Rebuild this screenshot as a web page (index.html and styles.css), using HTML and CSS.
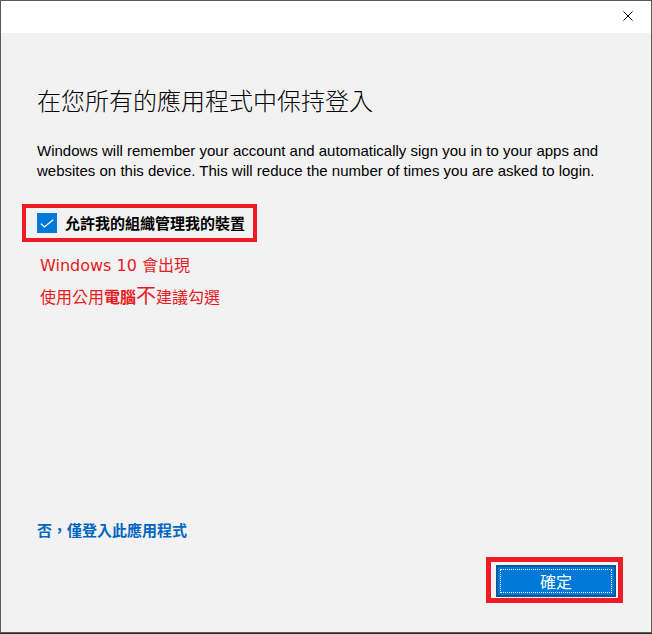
FILE: index.html
```html
<!DOCTYPE html>
<html lang="zh-Hant">
<head>
<meta charset="utf-8">
<title>在您所有的應用程式中保持登入</title>
<link rel="stylesheet" href="styles.css">
</head>
<body>
<div class="window">
  <div class="titlebar">
    <button class="close" aria-label="關閉">
      <svg width="10" height="10" viewBox="0 0 10 10"><path d="M0.5 0.5 L9.5 9.5 M9.5 0.5 L0.5 9.5" stroke="#000" stroke-width="1" fill="none"/></svg>
    </button>
  </div>
  <div class="content">
    <h1 class="heading">在您所有的應用程式中保持登入</h1>
    <p class="desc">Windows will remember your account and automatically sign you in to your apps and websites on this device. This will reduce the number of times you are asked to login.</p>
    <div class="mark-row">
      <label class="check">
        <span class="box"><svg width="20" height="20" viewBox="0 0 20 20"><path d="M3.8 10.6 L7.4 14 L16.2 6.8" stroke="#fff" stroke-width="1.2" fill="none"/></svg></span>
        <span class="check-label">允許我的組織管理我的裝置</span>
      </label>
    </div>
    <p class="note">Windows 10 會出現</p>
    <p class="note note2">使用公用<b>電腦</b><span class="big">不</span>建議勾選</p>
    <a class="link" href="#">否，僅登入此應用程式</a>
  </div>
  <div class="footer">
    <div class="mark-btn">
      <button class="ok"><span class="focus">確定</span></button>
    </div>
  </div>
</div>
</body>
</html>
```

FILE: styles.css
```css
html, body {
  margin: 0;
  padding: 0;
  background: #2a2a2a;
}
body {
  width: 652px;
  height: 634px;
  font-family: "Noto Sans", "Noto Sans CJK TC", sans-serif;
}
.window {
  box-sizing: border-box;
  width: 652px;
  height: 633px;
  border: 1px solid #5a5a5a;
  background: #f2f2f2;
  display: flex;
  flex-direction: column;
}
.titlebar {
  height: 32px;
  background: #fff;
  display: flex;
  justify-content: flex-end;
  flex: none;
}
.close {
  width: 46px;
  height: 32px;
  border: 0;
  padding: 0;
  margin: 0;
  background: transparent;
  display: flex;
  align-items: center;
  justify-content: center;
}
.close svg { display: block; margin-top: -2px; }
.content {
  flex: 1;
  display: flex;
  flex-direction: column;
  align-items: flex-start;
  padding: 51px 0 0 36px;
}
.heading {
  margin: 0;
  font-family: "Noto Sans CJK TC", sans-serif;
  font-weight: 300;
  font-size: 24px;
  line-height: 32px;
  color: #000;
}
.desc {
  margin: 25px 0 0 0;
  width: 580px;
  font-family: "Liberation Sans", "Noto Sans CJK TC", sans-serif;
  font-size: 15px;
  line-height: 20px;
  color: #000;
}
.mark-row {
  margin: 23px 0 0 -15px;
  border: 4px solid #ed1c24;
  padding: 5px 8px 5px 11px;
}
.check {
  display: flex;
  align-items: center;
  gap: 8px;
}
.box {
  width: 20px;
  height: 20px;
  background: #0078d7;
  display: block;
}
.box svg { display: block; }
.check-label {
  font-family: "Noto Sans CJK TC", sans-serif;
  font-weight: 700;
  font-size: 15px;
  line-height: 20px;
  color: #000;
}
.note {
  margin: 12px 0 0 3px;
  font-family: "DejaVu Sans", "Noto Sans CJK TC", sans-serif;
  font-size: 16px;
  line-height: 24px;
  color: #e81a24;
}
.note2 {
  margin-top: 5px;
  font-family: "Noto Sans CJK TC", sans-serif;
}
.note b { font-weight: 700; }
.note .big { font-size: 20px; }
.link {
  margin-top: auto;
  margin-bottom: 17px;
  font-family: "Noto Sans CJK TC", sans-serif;
  font-weight: 700;
  font-size: 15px;
  line-height: 20px;
  color: #0067c0;
  text-decoration: none;
}
.footer {
  flex: none;
  display: flex;
  justify-content: flex-end;
  padding: 0 28px 29px 0;
}
.mark-btn {
  border: 5px solid #ed1c24;
  padding: 3px 2px 1px 5px;
}
.ok {
  display: block;
  box-sizing: border-box;
  width: 120px;
  height: 32px;
  margin: 0;
  padding: 2px;
  border: 2px solid #005a9e;
  background: #0078d7;
  font-family: "Noto Sans CJK TC", sans-serif;
  font-size: 16px;
  color: #fff;
}
.focus {
  display: flex;
  align-items: center;
  justify-content: center;
  height: 100%;
  box-sizing: border-box;
  border: 1px dotted #fff;
}
```
